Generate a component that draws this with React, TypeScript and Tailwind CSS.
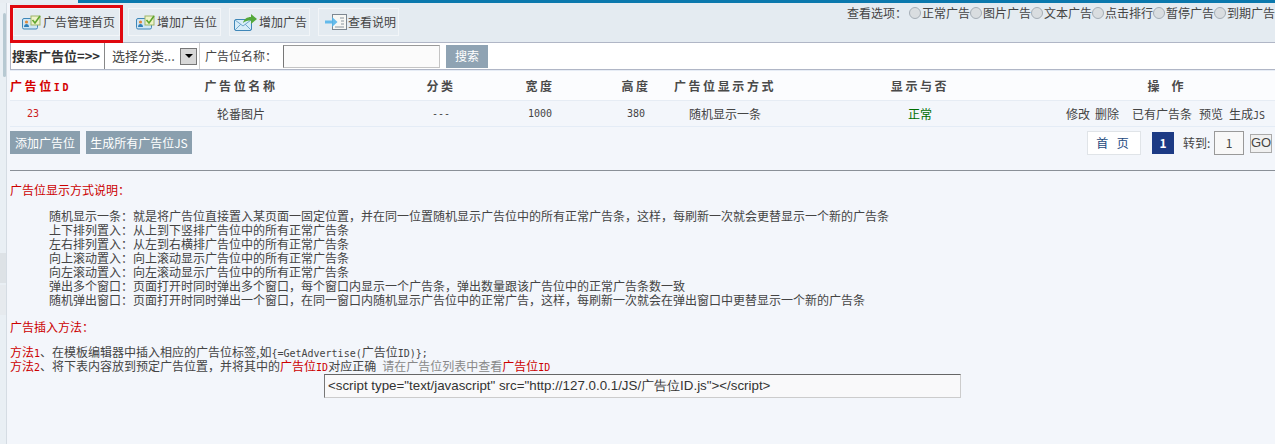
import React from 'react';

const cjk = 'font-["Noto_Sans_CJK_SC",sans-serif]';
const mono = "font-['DejaVu_Sans_Mono',monospace] text-[10px] leading-none";

function CardIcon() {
  return (
    <svg width="20" height="16" viewBox="0 0 20 16" className="shrink-0">
      <rect x="0.500" y="4.500" width="15" height="10.500" rx="1.500" fill="#cfe6f5" stroke="#3f87b8" />
      <circle cx="4.500" cy="8" r="1.600" fill="#e08a3c" />
      <path d="M2 13c0-2 1.200-3 2.500-3S7 11 7 13z" fill="#2f7fb8" />
      <rect x="9" y="2" width="9" height="9" fill="#eef3c8" stroke="#9db56a" />
      <path d="M10.500 6l2.500 3 5-7" fill="none" stroke="#5fa52e" strokeWidth="1.600" />
    </svg>
  );
}

function MailIcon() {
  return (
    <svg width="24" height="18" viewBox="0 0 24 18" className="shrink-0">
      <rect x="0.500" y="6.500" width="17" height="11" rx="1.500" fill="#d6ecf8" stroke="#3f87b8" />
      <path d="M1 7l8 6 8-6M1 17l6-6M17 17l-6-6" fill="none" stroke="#6fa6cc" />
      <path d="M9 10c1-4 4-6 8-6V1l6 5-6 5V7.500c-3 0-6 .5-8 2.500z" fill="#54a83a" />
    </svg>
  );
}

function DocIcon() {
  return (
    <svg width="24" height="16" viewBox="0 0 24 16" className="shrink-0">
      <rect x="9.500" y="0.500" width="14" height="15" fill="#f7f7f4" stroke="#7d8791" />
      <path d="M17 4h4M18 7h3M18 10h3M12 13h9" stroke="#8b96a0" />
      <path d="M2 6.500h7V3l5.500 5L9 13V9.500H2z" fill="#55b5ea" opacity="0.9" />
    </svg>
  );
}

const tools = [
  { label: '广告管理首页', icon: <CardIcon />, cls: 'w-[107px] pl-[8px]' },
  { label: '增加广告位', icon: <CardIcon />, cls: 'w-[93px] pl-[7px]' },
  { label: '增加广告', icon: <MailIcon />, cls: 'w-[81px] pl-[4px]' },
  { label: '查看说明', icon: <DocIcon />, cls: 'w-[81px] pl-[4px]' },
];

const options = ['正常广告', '图片广告', '文本广告', '点击排行', '暂停广告', '到期广告'];

const columns = [
  { label: '广告位名称', cls: 'w-[338px]' },
  { label: '分类', cls: 'w-[62px]' },
  { label: '宽度', cls: 'w-[136px]' },
  { label: '高度', cls: 'w-[56px]' },
  { label: '广告位显示方式', cls: 'w-[122px]' },
  { label: '显示与否', cls: 'w-[268px]' },
];

const modes = [
  '随机显示一条：就是将广告位直接置入某页面一固定位置，并在同一位置随机显示广告位中的所有正常广告条，这样，每刷新一次就会更替显示一个新的广告条',
  '上下排列置入：从上到下竖排广告位中的所有正常广告条',
  '左右排列置入：从左到右横排广告位中的所有正常广告条',
  '向上滚动置入：向上滚动显示广告位中的所有正常广告条',
  '向左滚动置入：向左滚动显示广告位中的所有正常广告条',
  '弹出多个窗口：页面打开时同时弹出多个窗口，每个窗口内显示一个广告条，弹出数量跟该广告位中的正常广告条数一致',
  '随机弹出窗口：页面打开时同时弹出一个窗口，在同一窗口内随机显示广告位中的正常广告，这样，每刷新一次就会在弹出窗口中更替显示一个新的广告条',
];

export default function App() {
  return (
    <div className={`w-[1275px] h-[444px] overflow-hidden flex flex-col bg-[#f3f6fb] text-[12px] text-[#444] ${cjk}`}>
      <div className="h-[3px] shrink-0 flex bg-[#0a78ad]">
        <div className="w-[78px] bg-[#e8edf2]" />
      </div>
      <div className="flex flex-1 min-h-0">
        {/* left edge of the frame */}
        <div className="w-[7px] shrink-0 flex flex-col bg-[#e9eff4] border-r border-[#d5dce3]">
          <div className="mt-[10px] ml-[3px] w-[3px] h-[64px] rounded-sm bg-[#b7c9d2]" />
          <div className="mt-[176px] h-[30px] bg-[#dde2e6]" />
          <div className="mt-[2px] h-[30px] bg-[#e6eaee]" />
        </div>
        <div className="flex-1 min-w-0 pl-[3px] flex flex-col">
          {/* toolbar */}
          <div className="relative h-[40px] shrink-0 flex items-start justify-between bg-[#e4ebf1] border-b border-[#b0b6c6]">
            <div className="flex items-center gap-[8px] pt-[5px] pl-[3px]">
              {tools.map((t) => (
                <div key={t.label} className={`h-[28px] flex items-center gap-[1px] border border-[#f2f5f8] bg-[#e4ebf1] text-[#444] ${t.cls}`}>
                  {t.icon}
                  <span>{t.label}</span>
                </div>
              ))}
            </div>
            <div className="flex items-center pt-[1px] text-[#444]">
              <span className="mr-[2px]">查看选项：</span>
              {options.map((o) => (
                <span key={o} className="flex items-center">
                  <span className="w-[12px] h-[12px] rounded-full border border-[#a5aeb6] bg-[#d9dde0]" />
                  <span className="ml-[1px]">{o}</span>
                </span>
              ))}
            </div>
            <div className="absolute left-0 top-[2px] w-[113px] h-[38px] border-[3px] border-[#e0080f]" />
          </div>

          {/* search */}
          <div className="h-[27px] shrink-0 flex items-center bg-white border-b border-l border-[#b0b6c6]">
            <div className="w-[94px] h-full flex items-center border-r border-[#888] pl-[1px] text-[13px] font-bold text-[#333]">搜索广告位=&gt;&gt;</div>
            <div className="w-[95px] h-full flex items-center justify-between pl-[7px] pr-[2px] border-r border-[#d0d0d0] text-[13px]">
              <span>选择分类...</span>
              <span className="w-[17px] h-[17px] flex items-center justify-center border border-[#777] bg-[#d8d8d8]">
                <span className="w-0 h-0 border-x-[4px] border-x-transparent border-t-[4px] border-t-black" />
              </span>
            </div>
            <span className="ml-[5px] w-[78px]">广告位名称：</span>
            <div className="w-[157px] h-[23px] border border-[#c4c4c4] border-l-[#777] border-t-[#999] bg-[#fbfbfb]" />
            <div className="ml-[6px] w-[42px] h-[23px] flex items-center justify-center bg-[#8fa3b3] text-white">搜索</div>
          </div>

          {/* table */}
          <div className="h-[1px] shrink-0 bg-[#e6ecf5]" />
          <div className="h-[30px] shrink-0 flex items-center bg-[#fbfcfe] border-b border-[#e6ecf4] font-bold tracking-[2.6px] text-[#4a4a4a]">
            <div className="w-[62px] text-[#d40000]">广告位<span className={mono}>ID</span></div>
            {columns.map((c) => (
              <div key={c.label} className={`text-center whitespace-nowrap ${c.cls}`}>{c.label}</div>
            ))}
            <div className="flex-1 text-center tracking-normal pl-[2px]">操　作</div>
          </div>
          <div className="h-[26px] shrink-0 flex items-center border-b border-[#e4ecf6] bg-[#f3f6fb]">
            <div className={`w-[62px] pl-[17px] text-[#cc2020] ${mono}`}>23</div>
            <div className="w-[338px] text-center">轮番图片</div>
            <div className={`w-[62px] text-center ${mono}`}>---</div>
            <div className={`w-[136px] text-center ${mono}`}>1000</div>
            <div className={`w-[56px] text-center ${mono}`}>380</div>
            <div className="w-[122px] text-center">随机显示一条</div>
            <div className="w-[268px] text-center text-[#006e00]">正常</div>
            <div className="flex-1 flex justify-end items-center gap-[5px] pr-[10px]">
              <span>修改</span>
              <span className="mr-[8px]">删除</span>
              <span className="mr-[2px]">已有广告条</span>
              <span className="mr-[1px]">预览</span>
              <span>生成<span className={mono}>JS</span></span>
            </div>
          </div>

          {/* actions + pager */}
          <div className="h-[44px] shrink-0 flex items-start justify-between border-b border-[#8a9097]">
            <div className="flex gap-[6px] pt-[4px]">
              <div className="w-[70px] h-[23px] flex items-center justify-center bg-[#8a9fae] text-white">添加广告位</div>
              <div className="w-[106px] h-[23px] flex items-center justify-center bg-[#8a9fae] text-white">生成所有广告位JS</div>
            </div>
            <div className="flex items-center pt-[4px] pr-[3px]">
              <div className="w-[54px] h-[24px] flex items-center justify-center border border-[#e0e4e8] bg-white text-[#1d4a80] tracking-[3px]">首 页</div>
              <div className="ml-[11px] w-[22px] h-[22px] flex items-center justify-center bg-[#1c3a84] font-bold text-white">1</div>
              <span className="ml-[9px] w-[31px]">转到:</span>
              <div className="w-[30px] h-[24px] flex items-center justify-center border border-[#999] bg-[#f8f8f8]">1</div>
              <div className="ml-[6px] w-[22px] h-[19px] flex items-center justify-center border border-[#aaa] bg-[#f0f0f0] text-[13px] font-['Liberation_Sans',sans-serif]">GO</div>
            </div>
          </div>

          {/* help text */}
          <div className="pt-[12px] leading-[14px]">
            <p className="text-[#cc0000]">广告位显示方式说明：</p>
            <div className="mt-[12px] pl-[39px]">
              {modes.map((m) => (
                <p key={m} className="whitespace-nowrap">{m}</p>
              ))}
            </div>
            <p className="mt-[13px] text-[#cc0000]">广告插入方法：</p>
            <p className="mt-[11px]">
              <span className="text-[#cc0000]">方法<span className={mono}>1</span></span>、在模板编辑器中插入相应的广告位标签,如<span className={mono}>{'{=GetAdvertise('}</span>广告位<span className={mono}>{'ID)};'}</span>
            </p>
            <p>
              <span className="text-[#cc0000]">方法<span className={mono}>2</span></span>、将下表内容放到预定广告位置，并将其中的<span className="text-[#cc0000]">广告位<span className={mono}>ID</span></span>对应正确<span className="ml-[6px] text-[#888]">请在广告位列表中查看</span><span className="text-[#cc0000]">广告位<span className={mono}>ID</span></span>
            </p>
            <div className="ml-[314px] mt-[1px] w-[637px] h-[24px] flex items-center pl-[3px] border border-[#ccc] border-t-[#666] border-l-[#777] bg-[#f9f9fa] text-[13.33px] text-[#333] font-['Liberation_Sans',sans-serif]">
              {'<script type="text/javascript" src="http://127.0.0.1/JS/广告位ID.js"></script>'}
            </div>
          </div>
        </div>
      </div>
    </div>
  );
}
